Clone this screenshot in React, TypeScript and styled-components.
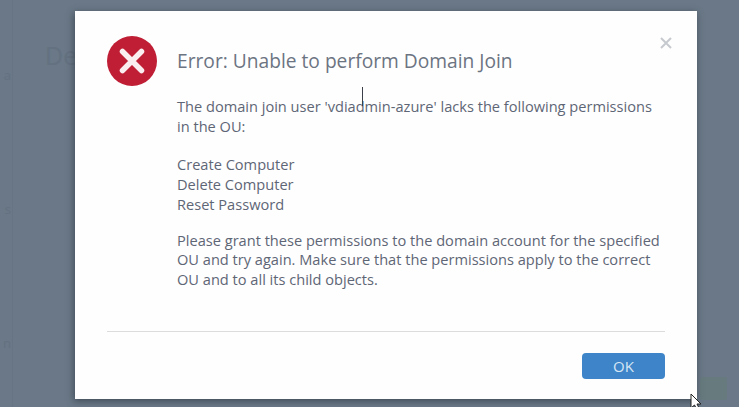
import React from "react";
import styled, { createGlobalStyle } from "styled-components";

const GlobalStyle = createGlobalStyle`
  html, body {
    margin: 0;
    padding: 0;
    background: #6a7887;
  }
`;

const Page = styled.div`
  position: relative;
  display: flex;
  width: 739px;
  height: 407px;
  overflow: hidden;
  background: #6a7887;
  font-family: "Open Sans", "Liberation Sans", sans-serif;
`;

/* dimmed app behind the modal */
const Sidebar = styled.div`
  display: flex;
  flex-direction: column;
  align-items: flex-end;
  width: 11px;
  padding: 66px 1px 0 0;
  gap: 116px;
  border-right: 1px solid #667483;
  color: #647180;
  font-size: 13px;
  line-height: 18px;
`;

const BackPanel = styled.div`
  flex: 1;
  display: flex;
  flex-direction: column;
  justify-content: space-between;
  padding: 38px 12px 7px 32px;
`;

const BackTitle = styled.div`
  font-size: 25px;
  line-height: 34px;
  color: #647180;
`;

const BackButton = styled.div`
  align-self: flex-end;
  width: 27px;
  height: 23px;
  border-radius: 2px;
  background: #677b7e;
`;

const Overlay = styled.div`
  position: absolute;
  inset: 0;
  padding: 11px 42px 8px 75px;
`;

const Dialog = styled.div`
  position: relative;
  box-sizing: border-box;
  display: flex;
  flex-direction: column;
  height: 100%;
  padding: 25px 32px 20px 32px;
  background: #fefefe;
  box-shadow: -1px 2px 7px rgba(50, 58, 68, 0.75);
`;

const Header = styled.div`
  display: flex;
  align-items: center;
  gap: 20px;
  height: 50px;
`;

const Title = styled.h1`
  margin: 0;
  font-size: 19.2px;
  font-weight: 400;
  line-height: 26px;
  color: #6c7482;
`;

const CloseIcon = styled.svg`
  position: absolute;
  top: 26px;
  right: 25px;
  width: 12px;
  height: 12px;
`;

const Body = styled.div`
  flex: 1;
  padding: 11px 0 0 70px;
  font-size: 14.6px;
  line-height: 19.7px;
  color: #5e6676;
`;

const Paragraph = styled.p<{ $gap: number }>`
  margin: 0 0 ${(p) => p.$gap}px;
`;

const Divider = styled.div`
  height: 1px;
  background: #dcdcdc;
`;

const Footer = styled.div`
  display: flex;
  justify-content: flex-end;
  padding-top: 21px;
`;

const OkButton = styled.button`
  width: 83px;
  height: 26px;
  padding: 0;
  border: none;
  border-radius: 4px;
  background: #3d85c8;
  color: #d5e6f5;
  font-family: inherit;
  font-size: 15px;
  line-height: 26px;
`;

const TextCaret = styled.div`
  position: absolute;
  left: 362px;
  top: 87px;
  width: 1px;
  height: 19px;
  background: #3a3f48;
`;

const Pointer = styled.svg`
  position: absolute;
  left: 690px;
  top: 393px;
  width: 12px;
  height: 14px;
`;

const App = () => (
  <Page>
    <GlobalStyle />
    <Sidebar>
      <span>a</span>
      <span>s</span>
      <span>n</span>
    </Sidebar>
    <BackPanel>
      <BackTitle>De</BackTitle>
      <BackButton />
    </BackPanel>

    <Overlay>
      <Dialog>
        <Header>
          <svg width="50" height="50" viewBox="0 0 50 50">
            <circle cx="25" cy="25" r="25" fill="#bf1e35" />
            <path
              d="M15.5 15.5 L34.5 34.5 M34.5 15.5 L15.5 34.5"
              stroke="#fbeef0"
              strokeWidth="5.5"
              strokeLinecap="round"
            />
          </svg>
          <Title>Error: Unable to perform Domain Join</Title>
        </Header>
        <CloseIcon viewBox="0 0 12 12">
          <path d="M1 1 L11 11 M11 1 L1 11" stroke="#c6cacf" strokeWidth="2" />
        </CloseIcon>
        <Body>
          <Paragraph $gap={19}>
            The domain join user 'vdiadmin-azure' lacks the following permissions
            <br />
            in the OU:
          </Paragraph>
          <Paragraph $gap={16}>
            Create Computer
            <br />
            Delete Computer
            <br />
            Reset Password
          </Paragraph>
          <Paragraph $gap={0}>
            Please grant these permissions to the domain account for the specified
            <br />
            OU and try again. Make sure that the permissions apply to the correct
            <br />
            OU and to all its child objects.
          </Paragraph>
        </Body>
        <Divider />
        <Footer>
          <OkButton>OK</OkButton>
        </Footer>
      </Dialog>
    </Overlay>

    <TextCaret />
    <Pointer viewBox="0 0 12 14">
      <path d="M1 1 L1 15 L4.5 12 L7 17 L9.5 16 L7 11 L11 11 Z" fill="#fff" stroke="#222" strokeWidth="1" />
    </Pointer>
  </Page>
);

export default App;
